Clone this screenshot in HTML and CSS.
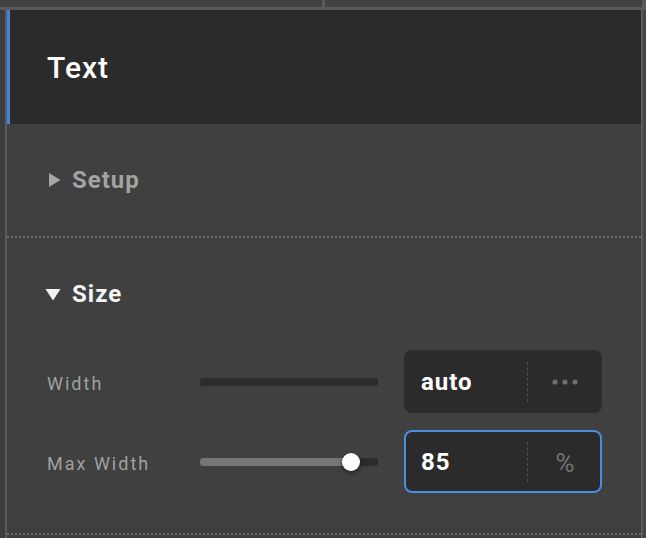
FILE: index.html
```html
<!DOCTYPE html>
<html>
<head>
<meta charset="utf-8">
<link rel="stylesheet" href="styles.css">
</head>
<body>
<div class="top">
  <div class="top-pane top-left"></div>
  <div class="top-pane top-right"></div>
</div>
<div class="main-row">
  <div class="left-col"></div>
  <div class="panel">
    <div class="panel-header">Text</div>
    <div class="section">
      <div class="section-head collapsed">
        <svg class="caret" width="13" height="16" viewBox="0 0 13 16"><polygon points="1,1 12.5,8 1,15" fill="#a6a6a6"/></svg>
        <span>Setup</span>
      </div>
    </div>
    <div class="section">
      <div class="section-head open">
        <svg class="caret caret-down" width="16" height="13" viewBox="0 0 16 13"><polygon points="0.5,1 15.5,1 8,12.5" fill="#f2f2f2"/></svg>
        <span>Size</span>
      </div>
      <div class="rows">
        <div class="row">
          <div class="label">Width</div>
          <div class="slider"><div class="track"></div></div>
          <div class="field">
            <div class="value">auto</div>
            <div class="unit">
              <svg width="26" height="6" viewBox="0 0 26 6"><circle cx="3" cy="3" r="2.6" fill="#6e6e6e"/><circle cx="13" cy="3" r="2.6" fill="#6e6e6e"/><circle cx="23" cy="3" r="2.6" fill="#6e6e6e"/></svg>
            </div>
          </div>
        </div>
        <div class="row">
          <div class="label">Max Width</div>
          <div class="slider">
            <div class="track"><div class="fill" style="width:85%"></div></div>
            <div class="thumb" style="left:85%"></div>
          </div>
          <div class="field focused">
            <div class="value">85</div>
            <div class="unit unit-text">%</div>
          </div>
        </div>
      </div>
    </div>
  </div>
  <div class="right-col"></div>
</div>
</body>
</html>
```
FILE: styles.css
```css
html, body {
  margin: 0;
  padding: 0;
}
body {
  width: 646px;
  height: 538px;
  overflow: hidden;
  background: #5a5a5a;
  font-family: Roboto, "Liberation Sans", sans-serif;
}
.top {
  display: flex;
  gap: 3px;
  height: 7px;
}
.top-pane {
  background: #414141;
}
.top-left {
  width: 322px;
}
.top-right {
  flex: 1;
  margin-right: 4px;
}
.main-row {
  display: flex;
  margin-top: 3px;
  height: 528px;
}
.left-col {
  width: 5px;
  background: #3d3d3d;
  margin-right: 2px;
}
.panel {
  width: 634px;
  background: #404040;
  display: flex;
  flex-direction: column;
}
.right-col {
  width: 3px;
  margin-left: 2px;
  background: #464646;
}
.panel-header {
  height: 114px;
  box-sizing: border-box;
  background: #2b2b2b;
  border-left: 3px solid #3f86e0;
  padding-left: 37px;
  display: flex;
  align-items: center;
  color: #ffffff;
  font-size: 30px;
  font-weight: 500;
  letter-spacing: 1px;
}
.section {
  padding-bottom: 2px;
  background-image: repeating-linear-gradient(90deg, #6c6c6c 0 2px, transparent 2px 4px);
  background-size: 100% 2px;
  background-repeat: no-repeat;
  background-position: left bottom;
}
.section-head {
  height: 112px;
  display: flex;
  align-items: center;
  padding-left: 41px;
  font-size: 24px;
  font-weight: 700;
  letter-spacing: 1px;
}
.section-head .caret {
  margin-right: 11px;
}
.section-head.open {
  padding-left: 38px;
}
.section-head.open .caret {
  margin-right: 11px;
}
.collapsed {
  color: #a3a3a3;
}
.open {
  color: #f4f4f4;
}
.rows {
  display: flex;
  flex-direction: column;
  gap: 17px;
  padding: 0 39px 40px 40px;
}
.row {
  display: grid;
  grid-template-columns: 127px 178px 198px;
  column-gap: 26px;
  align-items: center;
  height: 63px;
}
.label {
  color: #a0a0a0;
  font-size: 18px;
  letter-spacing: 2px;
  padding-top: 3px;
}
.slider {
  position: relative;
  height: 18px;
  display: flex;
  align-items: center;
}
.track {
  width: 100%;
  height: 8px;
  border-radius: 3px;
  background: #2b2b2b;
  overflow: hidden;
}
.fill {
  height: 100%;
  background: #767676;
}
.thumb {
  position: absolute;
  top: 0;
  width: 18px;
  height: 18px;
  margin-left: -9px;
  border-radius: 50%;
  background: #ffffff;
  box-shadow: 0 2px 5px rgba(0, 0, 0, 0.45);
}
.field {
  height: 63px;
  box-sizing: border-box;
  background: #2b2b2b;
  border-radius: 8px;
  display: flex;
  align-items: stretch;
}
.field.focused {
  border: 2px solid #4a8ee0;
}
.value {
  width: 124px;
  box-sizing: border-box;
  padding-left: 17px;
  display: flex;
  align-items: center;
  color: #ffffff;
  font-size: 24px;
  font-weight: 700;
  letter-spacing: 1px;
  position: relative;
}
.value::after {
  content: "";
  position: absolute;
  right: 0;
  top: 12px;
  bottom: 11px;
  border-right: 1px dashed #4f4f4f;
}
.focused .value {
  width: 122px;
  padding-left: 15px;
}
.focused .value::after {
  top: 10px;
  bottom: 9px;
}
.unit {
  flex: 1;
  display: flex;
  align-items: center;
  justify-content: center;
}
.unit-text {
  color: #727272;
  font-size: 26px;
  padding-left: 2px;
  padding-top: 2px;
}
```
